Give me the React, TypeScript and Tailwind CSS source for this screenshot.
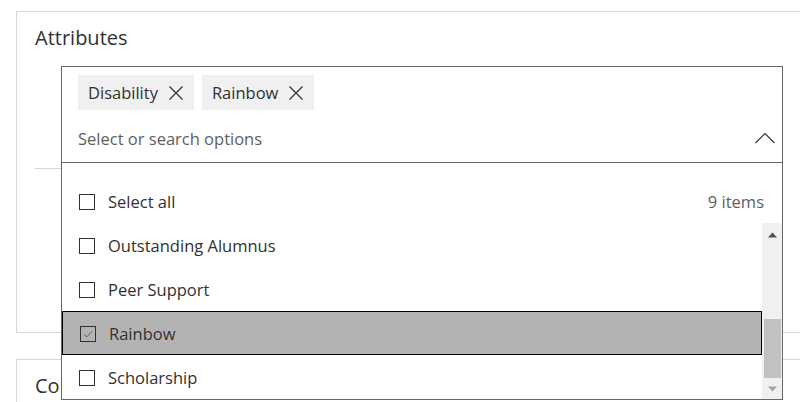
import React from "react";

const font = { fontFamily: '"Open Sans", "Noto Sans", sans-serif' };

function Box({ checked }: { checked?: boolean }) {
  return (
    <svg width="16" height="16" viewBox="0 0 16 16" className="mt-[1px] shrink-0">
      <rect x="0.5" y="0.5" width="15" height="15" fill="none" stroke="#323130" strokeWidth="1" />
      {checked && <path d="M4 8.5 L6.6 11 L12 5.5" fill="none" stroke="#605e5c" strokeWidth="1" />}
    </svg>
  );
}

function XIcon() {
  return (
    <svg width="16" height="16" viewBox="0 0 16 16" className="shrink-0">
      <path d="M1.5 1.5 L14.5 14.5 M14.5 1.5 L1.5 14.5" stroke="#323130" strokeWidth="1.2" />
    </svg>
  );
}

function Tag({ label }: { label: string }) {
  return (
    <div className="flex h-[35px] items-center gap-[10px] bg-[#f0f0f0] pl-[10px] pr-[10px] text-[16.5px] text-[#323130]">
      <span className="pt-[2px]">{label}</span>
      <XIcon />
    </div>
  );
}

function Row({ label, checked, selected }: { label: string; checked?: boolean; selected?: boolean }) {
  return (
    <div
      className={
        "flex h-[44px] items-center gap-[13px] pl-[17px] text-[16.5px] text-[#323130] " +
        (selected ? "border border-black bg-[#b3b3b3] pl-[16px]" : "")
      }
    >
      <Box checked={checked} />
      <span className="pt-[2px]">{label}</span>
    </div>
  );
}

export default function App() {
  return (
    <div className="relative h-[402px] w-[800px] overflow-hidden bg-white" style={font}>
      <div className="flex flex-col pl-[16px] pt-[11px]">
        <div className="h-[322px] w-[800px] border border-[#d6d6d6] pl-[18px] pt-[12px]">
          <div className="text-[20px] leading-[28px] text-[#323130]">Attributes</div>
          <div className="mt-[116px] h-px w-[660px] bg-[#d6d6d6]" />
        </div>
        <div className="mt-[26px] h-[60px] w-[800px] border border-[#d6d6d6] pl-[18px] pt-[12px]">
          <div className="text-[20px] leading-[28px] text-[#323130]">Content</div>
        </div>
      </div>

      <div className="absolute left-[61px] top-[66px] flex h-[334px] w-[722px] flex-col border border-[#666666] bg-white">
        <div className="flex h-[97px] flex-col border-b border-[#666666] px-[16px] pt-[8px]">
          <div className="flex gap-[8px]">
            <Tag label="Disability" />
            <Tag label="Rainbow" />
          </div>
          <div className="mt-[15px] flex items-center justify-between">
            <span className="pt-[2px] text-[16.5px] leading-[24px] text-[#605e5c]">Select or search options</span>
            <svg width="20" height="12" viewBox="0 0 20 12" className="mr-[-9px]">
              <path d="M0.5 11 L10 1.5 L19.5 11" fill="none" stroke="#323130" strokeWidth="1.2" />
            </svg>
          </div>
        </div>
        <div className="flex flex-1 flex-col pt-[16px]">
          <div className="flex h-[44px] items-center justify-between pl-[17px] pr-[18px] text-[16.5px]">
            <div className="flex items-center gap-[13px] text-[#323130]">
              <Box />
              <span className="pt-[2px]">Select all</span>
            </div>
            <span className="pt-[2px] text-[#605e5c]">9 items</span>
          </div>
          <div className="flex flex-1">
            <div className="flex flex-1 flex-col">
              <Row label="Outstanding Alumnus" />
              <Row label="Peer Support" />
              <Row label="Rainbow" checked selected />
              <Row label="Scholarship" />
            </div>
            <div className="flex w-[20px] flex-col items-center bg-[#f0f0f0]">
              <div className="flex h-[24px] items-center justify-center">
                <svg width="9" height="6" viewBox="0 0 9 6">
                  <path d="M0 5.5 L4.5 0.5 L9 5.5 Z" fill="#505050" />
                </svg>
              </div>
              <div className="flex-1" />
              <div className="h-[59px] w-[17px] bg-[#c1c1c1]" />
              <div className="flex h-[21px] items-center justify-center">
                <svg width="9" height="6" viewBox="0 0 9 6">
                  <path d="M0 0.5 L4.5 5.5 L9 0.5 Z" fill="#a3a3a3" />
                </svg>
              </div>
            </div>
          </div>
        </div>
      </div>
    </div>
  );
}
